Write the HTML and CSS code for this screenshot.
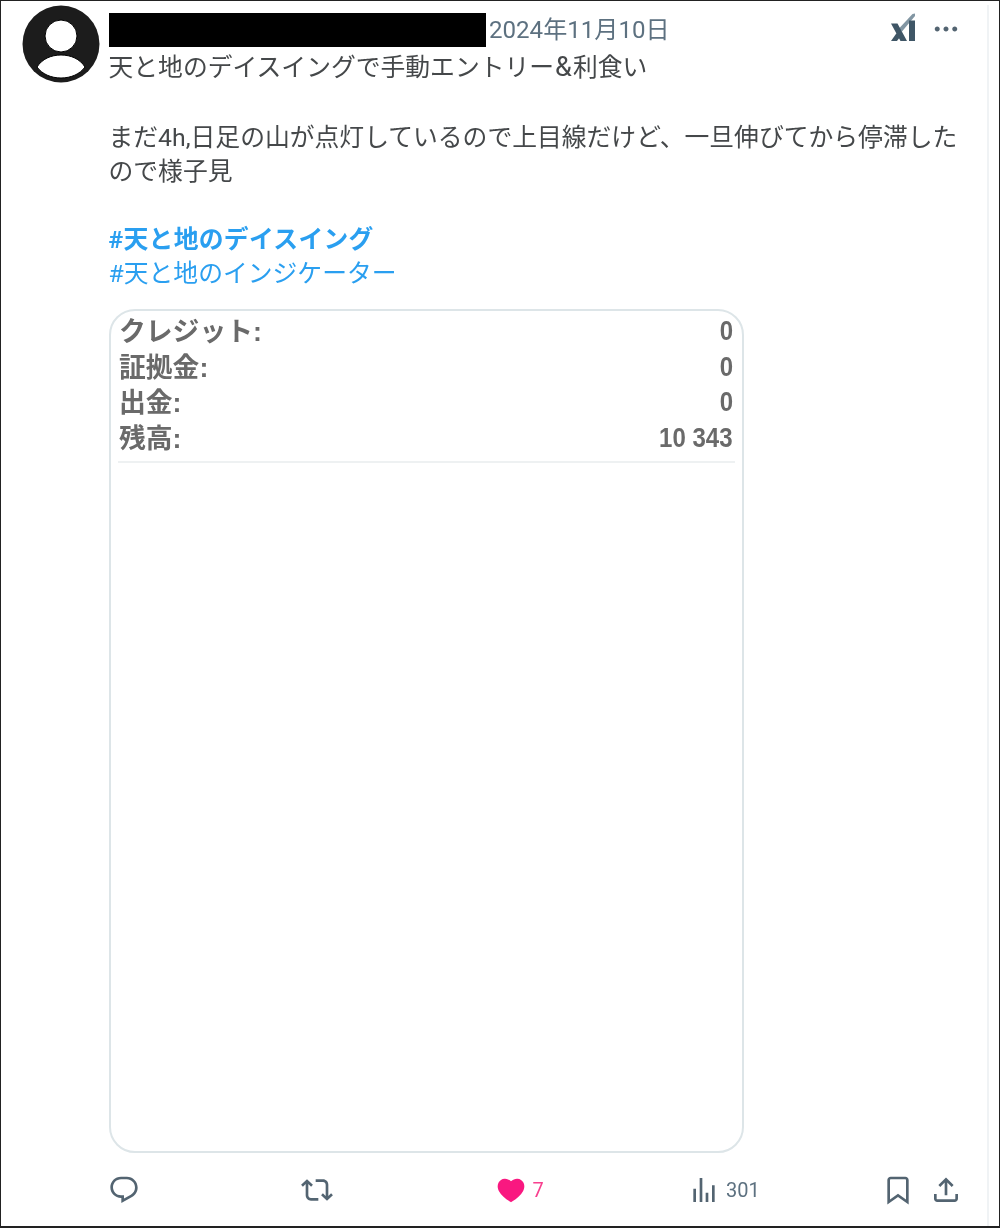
FILE: index.html
```html
<!DOCTYPE html>
<html lang="ja">
<head>
    <meta charset="UTF-8">
    <meta name="viewport" content="width=device-width, initial-scale=1.0">
    <title>投稿</title>
    <link rel="stylesheet" href="styles.css">
</head>
<body>
    <div class="frame">
        <div class="avatar">
            <svg viewBox="0 0 78 78" width="78" height="78">
                <circle cx="39" cy="39" r="38.5" fill="#1c1c1c"/>
                <circle cx="39" cy="31" r="16" fill="#fff" stroke="#000" stroke-width="1"/>
                <path d="M15 62C20 54 29 50 39 50S58 54 63 62C58 69 49 73 39 73S20 69 15 62z" fill="#fff" stroke="#000" stroke-width="1"/>
            </svg>
        </div>
        <div class="post">
            <div class="head">
                <div class="redacted"></div>
                <span class="date">2024年11月10日</span>
                <svg class="logo" viewBox="0 0 26 28" width="26" height="28">
                    <path d="M8 15.5L21.5 1 24 0.5 24 3 11 18.5z" fill="#8296a3"/>
                    <path d="M0 10.5h6.5L16 28H9.5zM0 28l6-8.5 3.2 4.2L6 28z" fill="#3f5666"/>
                    <path d="M18 7.5h6V28h-6z" fill="#3f5666"/>
                </svg>
                <svg class="dots" viewBox="0 0 24 24" width="30" height="30">
                    <path d="M3 12c0-1.1.9-2 2-2s2 .9 2 2-.9 2-2 2-2-.9-2-2zm9 2c1.1 0 2-.9 2-2s-.9-2-2-2-2 .9-2 2 .9 2 2 2zm7 0c1.1 0 2-.9 2-2s-.9-2-2-2-2 .9-2 2 .9 2 2 2z"/>
                </svg>
            </div>
            <div class="text">
                <p class="first">天と地のデイスイングで手動エントリー<span class="amp">&amp;</span>利食い</p>
                <p>まだ4h,日足の山が点灯しているので上目線だけど、一旦伸びてから停滞したので様子見</p>
                <p><a class="tag tag-bold">#天と地のデイスイング</a><br><a class="tag">#天と地のインジケーター</a></p>
            </div>
            <div class="card">
                <div class="rows">
                    <div class="row"><span class="label">クレジット:</span><b class="num">0</b></div>
                    <div class="row"><span class="label">証拠金:</span><b class="num">0</b></div>
                    <div class="row"><span class="label">出金:</span><b class="num">0</b></div>
                    <div class="row"><span class="label">残高:</span><b class="num">10 343</b></div>
                </div>
            </div>
            <div class="actions">
                <div class="action">
                    <svg viewBox="0 0 24 24" width="32" height="32"><path d="M1.751 10c0-4.42 3.584-8 8.005-8h4.366c4.49 0 8.129 3.64 8.129 8.13 0 2.96-1.607 5.68-4.196 7.11l-8.054 4.46v-3.69h-.067c-4.49.1-8.183-3.51-8.183-8.01zm8.005-6c-3.317 0-6.005 2.69-6.005 6 0 3.37 2.77 6.08 6.138 6.01l.351-.01h1.761v2.3l5.087-2.81c1.951-1.08 3.163-3.13 3.163-5.36 0-3.39-2.744-6.13-6.129-6.13H9.756z"/></svg>
                </div>
                <div class="action">
                    <svg viewBox="0 0 24 24" width="32" height="32"><path d="M4.5 3.88l4.432 4.14-1.364 1.46L5.5 7.55V16c0 1.1.896 2 2 2H13v2H7.5c-2.209 0-4-1.79-4-4V7.55L1.432 9.48.068 8.02 4.5 3.88zM16.5 6H11V4h5.5c2.209 0 4 1.79 4 4v8.45l2.068-1.93 1.364 1.46-4.432 4.14-4.432-4.14 1.364-1.46 2.068 1.93V8c0-1.1-.896-2-2-2z"/></svg>
                </div>
                <div class="action liked">
                    <svg viewBox="0 0 24 24" width="32" height="32"><path d="M20.884 13.19c-1.351 2.48-4.001 5.12-8.379 7.67l-.503.3-.504-.3c-4.379-2.55-7.029-5.19-8.382-7.67-1.36-2.5-1.41-4.86-.514-6.67.887-1.79 2.647-2.91 4.601-3.01 1.651-.09 3.368.56 4.798 2.01 1.429-1.45 3.146-2.1 4.796-2.01 1.954.1 3.714 1.22 4.601 3.01.896 1.81.846 4.17-.514 6.67z"/></svg>
                    <span>7</span>
                </div>
                <div class="action">
                    <svg viewBox="0 0 24 24" width="32" height="32"><path d="M8.75 21V3h2v18h-2zM18 21V8.5h2V21h-2zM4 21l.004-10h2L6 21H4zm9.248 0v-7h2v7h-2z"/></svg>
                    <span>301</span>
                </div>
                <div class="action end">
                    <svg viewBox="0 0 24 24" width="32" height="32"><path d="M4 4.5C4 3.12 5.119 2 6.5 2h11C18.881 2 20 3.12 20 4.5v18.44l-8-5.71-8 5.71V4.5zM6.5 4c-.276 0-.5.22-.5.5v14.56l6-4.29 6 4.29V4.5c0-.28-.224-.5-.5-.5h-11z"/></svg>
                    <svg viewBox="0 0 24 24" width="32" height="32"><path d="M12 2.59l5.7 5.7-1.41 1.42L13 6.41V16h-2V6.41l-3.3 3.3-1.41-1.42L12 2.59zM21 15l-.02 3.51c0 1.38-1.12 2.49-2.5 2.49H5.5C4.11 21 3 19.88 3 18.5V15h2v3.5c0 .28.22.5.5.5h12.98c.28 0 .5-.22.5-.5L19 15h2z"/></svg>
                </div>
            </div>
        </div>
    </div>
</body>
</html>
```

FILE: styles.css
```css
html, body {
    margin: 0;
    background-color: #fff;
}
.frame {
    box-sizing: border-box;
    width: 1000px;
    height: 1228px;
    border: 1px solid #222;
    border-bottom-width: 2px;
    padding: 4px 10px 0 21px;
    display: flex;
    gap: 9px;
    font-family: Roboto, "Noto Sans CJK JP", sans-serif;
    color: #45484a;
    filter: blur(0.4px);
}
.avatar {
    flex: none;
    width: 78px;
    height: 78px;
}
.avatar svg {
    display: block;
}
.post {
    flex: 1;
    min-width: 0;
    border-right: 2px solid #f0f3f5;
}
.head {
    display: flex;
    align-items: flex-start;
    height: 34px;
    margin-top: 8px;
}
.redacted {
    width: 377px;
    height: 34px;
    background-color: #000;
}
.date {
    margin-left: 3px;
    font-size: 24.1px;
    line-height: 34px;
    color: #5d7180;
}
.logo {
    margin-left: auto;
}
.dots {
    margin-top: 1px;
    margin-left: 14px;
    margin-right: 26px;
    fill: #536471;
}
.text {
    margin-top: 4px;
    padding-right: 28px;
    font-size: 24.8px;
    line-height: 34px;
}
.text p {
    margin: 0 0 34px -0.5px;
}
.text .first {
    margin-bottom: 36px;
}
.amp {
    margin: 0 1px;
    font-size: 27px;
    line-height: 1;
}
.tag {
    color: #2a9ff0;
}
.tag-bold {
    font-weight: bold;
    letter-spacing: 0.3px;
}
.card {
    box-sizing: border-box;
    width: 635px;
    height: 844px;
    margin-top: -16px;
    border: 2px solid #dde5e8;
    border-radius: 26px;
    padding: 2px 7px 0 7px;
}
.rows {
    border-bottom: 2px solid #eef1f2;
    padding-bottom: 6px;
}
.row {
    display: flex;
    justify-content: space-between;
    align-items: center;
    height: 35.5px;
    padding: 0 2px 0 1px;
    color: #6a6a6a;
    font-family: "Liberation Sans", "Noto Sans CJK JP", sans-serif;
    font-weight: bold;
}
.label {
    margin-bottom: 2px;
    font-size: 26.8px;
}
.num {
    margin-top: 2px;
    font-size: 27px;
    transform: scaleX(0.89);
    transform-origin: right center;
}
.actions {
    display: grid;
    grid-template-columns: repeat(4, 193.5px) 1fr;
    margin-top: 21px;
    margin-left: -1.5px;
}
.action {
    display: flex;
    align-items: center;
    gap: 6px;
    height: 32px;
    color: #5d7180;
    font-size: 20px;
}
.action svg {
    fill: #536471;
}
.liked {
    color: #f8408f;
}
.liked svg {
    fill: #f91880;
}
.end {
    gap: 16px;
}
```
